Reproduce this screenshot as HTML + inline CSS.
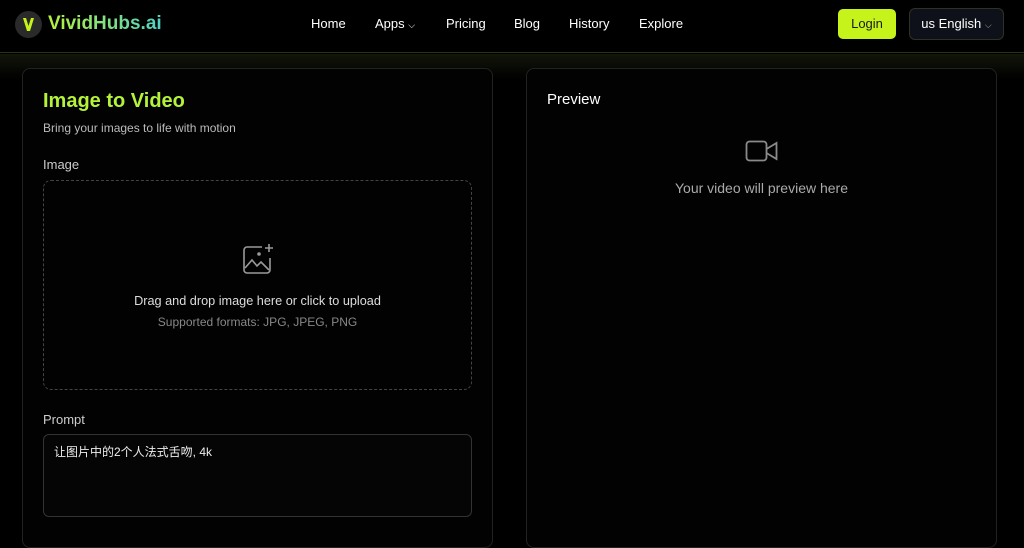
<!DOCTYPE html>
<html><head><meta charset="utf-8"><style>
*{box-sizing:border-box;margin:0;padding:0}
body{width:1024px;height:534px;overflow:hidden;background:#000;font-family:"Liberation Sans","Noto Sans CJK SC",sans-serif;color:#fff;position:relative}
.hdr{position:absolute;left:0;top:0;width:1024px;height:53px;background:#000;border-bottom:1px solid #2b3310}
.glow{position:absolute;left:0;top:54px;width:1024px;height:26px;background:linear-gradient(#12150a,#000)}
.logo{position:absolute;left:15px;top:11px;width:27px;height:27px;border-radius:50%;background:#2a2a2a}
.brand{position:absolute;left:48px;top:13px;font-size:19px;font-weight:bold;background:linear-gradient(90deg,#b5f23a,#4fd1c5);-webkit-background-clip:text;color:transparent}
.nav{position:absolute;top:16px;font-size:13px;color:#fff}
.login{position:absolute;left:838px;top:9px;width:58px;height:30px;background:#c6f41a;border-radius:5px;color:#1a1a1a;font-size:13px;text-align:center;line-height:30px}
.lang{position:absolute;left:909px;top:8px;width:95px;height:32px;background:#0e111a;border:1px solid #2c3322;border-radius:6px;font-size:13px;text-align:center;line-height:30px}
.card{position:absolute;top:68px;height:480px;border:1px solid #222;border-radius:8px;background:#020202}
.t{position:absolute;font-size:13px}
</style></head><body>
<div class="hdr"></div><div class="glow"></div>
<div class="logo"><svg width="27" height="27" viewBox="0 0 27 27"><path d="M8 7 L12 20 L15 20 L19 7 L16 7 L13.5 15 L11 7Z" fill="#c6f41a"/></svg></div>
<div class="brand">VividHubs.ai</div>
<div class="nav" style="left:311px">Home</div>
<div class="nav" style="left:375px">Apps <span style="font-size:9px">⌵</span></div>
<div class="nav" style="left:446px">Pricing</div>
<div class="nav" style="left:514px">Blog</div>
<div class="nav" style="left:569px">History</div>
<div class="nav" style="left:639px">Explore</div>
<div class="login">Login</div>
<div class="lang">us English <span style="font-size:9px;color:#aaa">⌵</span></div>
<div class="card" style="left:22px;width:471px"></div>
<div class="card" style="left:526px;width:471px"></div>
<div class="t" style="left:43px;top:90px;font-size:20px;font-weight:bold;color:#b5f23a">Image to Video</div>
<div class="t" style="left:43px;top:121px;font-size:12px;color:#bbb">Bring your images to life with motion</div>
<div class="t" style="left:43px;top:157px;color:#ccc">Image</div>
<div style="position:absolute;left:43px;top:180px;width:429px;height:210px;border:1.5px dashed #444;border-radius:8px"></div>
<svg style="position:absolute;left:242px;top:243px" width="34" height="32" viewBox="0 0 34 32" fill="none" stroke="#9a9a9a" stroke-width="1.6"><path d="M20 4H5a3 3 0 0 0-3 3v20a3 3 0 0 0 3 3h20a3 3 0 0 0 3-3V15"/><path d="M27 1v8M23 5h8"/><path d="M3 25l7-8 5 6 4-4 8 8"/><circle cx="17" cy="11" r="1" fill="#9a9a9a"/></svg>
<div class="t" style="left:43px;width:429px;text-align:center;top:294px;font-size:12.7px;color:#ddd">Drag and drop image here or click to upload</div>
<div class="t" style="left:43px;width:429px;text-align:center;top:315px;font-size:12px;color:#888">Supported formats: JPG, JPEG, PNG</div>
<div class="t" style="left:43px;top:412px;color:#ccc">Prompt</div>
<div style="position:absolute;left:43px;top:434px;width:429px;height:83px;border:1px solid #333;border-radius:6px;background:#050505"></div>
<div class="t" style="left:54px;top:443px;font-size:12px;color:#eee">让图片中的2个人法式舌吻, 4k</div>
<div class="t" style="left:547px;top:91px;font-size:15px">Preview</div>
<svg style="position:absolute;left:745px;top:140px" width="34" height="22" viewBox="0 0 34 22" fill="none" stroke="#8a8a8a" stroke-width="1.8"><rect x="1.5" y="1.5" width="20" height="19" rx="3"/><path d="M21.5 9l10-6v16l-10-6"/></svg>
<div class="t" style="left:526px;width:471px;text-align:center;top:180px;font-size:14px;color:#aaa">Your video will preview here</div>
</body></html>
